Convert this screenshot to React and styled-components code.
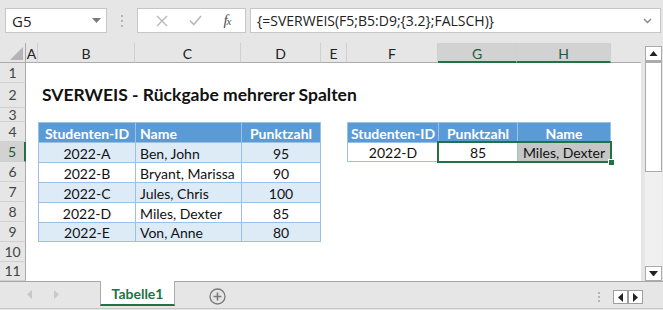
import React from 'react'
import styled, { createGlobalStyle } from 'styled-components'

const GlobalStyle = createGlobalStyle`
  html, body {
    margin: 0;
    padding: 0;
    background: #e6e6e6;
  }
  body {
    font-family: Lato, "Liberation Sans", sans-serif;
  }
`

const Window = styled.div`
  width: 663px;
  height: 310px;
  display: flex;
  flex-direction: column;
  background: #e6e6e6;
  overflow: hidden;
`

/* ---------- formula bar ---------- */

const FormulaBar = styled.div`
  height: 43px;
  flex: none;
  display: flex;
  align-items: flex-start;
  padding: 8px 2px 0 5px;
  box-sizing: border-box;
`

const Box = styled.div`
  height: 25px;
  box-sizing: border-box;
  background: #fff;
  border: 1px solid #c6c6c6;
  display: flex;
  align-items: center;
`

const NameBox = styled(Box)`
  width: 102px;
  justify-content: space-between;
  padding: 0 5px 0 6px;
  font: 15px "Open Sans", "Noto Sans", sans-serif;
  color: #222;
`

const Grip = styled.div`
  width: 30px;
  height: 25px;
  display: flex;
  flex-direction: column;
  align-items: center;
  justify-content: center;
  gap: 3px;

  span {
    width: 2px;
    height: 2px;
    background: #b4b4b4;
  }
`

const FnBox = styled(Box)`
  width: 109px;
  justify-content: space-around;
  padding: 0 4px 0 8px;
`

const Fx = styled.span`
  font: italic 15px "Liberation Serif", serif;
  color: #505050;
  letter-spacing: -1px;

  sub {
    font-size: 11px;
    vertical-align: 0;
  }
`

const FormulaInput = styled(Box)`
  flex: 1;
  margin-left: 4px;
  padding: 0 8px 0 6px;
  justify-content: space-between;
  font: 14px "Open Sans", "Noto Sans", sans-serif;
  color: #222;
`

/* ---------- sheet ---------- */

const SheetArea = styled.div`
  height: 238px;
  flex: none;
  display: flex;
`

const Grid = styled.div`
  width: 642px;
  display: grid;
  grid-template-columns: 26px 12px 97px 106px 80px 26px 91px 79px 94px 31px;
  grid-template-rows: 20px 20px 25px 14px repeat(7, 20px) 19px;
  background: #fff;
  overflow: hidden;
`

const Corner = styled.div`
  grid-column: 1;
  grid-row: 1;
  background: #e6e6e6;
  border-right: 1px solid #ababab;
  border-bottom: 1px solid #ababab;
  display: flex;
  align-items: flex-end;
  justify-content: flex-end;
  padding: 0 2px 2px 0;
`

const ColHead = styled.div`
  grid-row: 1;
  background: ${p => (p.$sel ? '#d2d2d2' : '#e6e6e6')};
  border-right: 1px solid ${p => (p.$last ? 'transparent' : '#d0d0d0')};
  border-bottom: ${p => (p.$sel ? '2px solid #217346' : '1px solid #ababab')};
  box-sizing: border-box;
  display: flex;
  align-items: center;
  justify-content: center;
  font-size: 14px;
  color: ${p => (p.$sel ? '#1e5b3a' : '#222')};
  padding-top: 2px;
`

const RowHead = styled.div`
  grid-column: 1;
  background: ${p => (p.$sel ? '#d2d2d2' : '#e6e6e6')};
  border-right: ${p => (p.$sel ? '2px solid #217346' : '1px solid #ababab')};
  border-bottom: 1px solid #d0d0d0;
  box-sizing: border-box;
  display: flex;
  align-items: center;
  justify-content: center;
  font-size: 14px;
  line-height: 12px;
  color: ${p => (p.$sel ? '#1e5b3a' : '#444')};
`

const RightEdge = styled.div`
  grid-column: 10;
  grid-row: 2 / -1;
  border-right: 1px solid #a6a6a6;
`

const Title = styled.div`
  grid-column: 3 / 11;
  grid-row: 3;
  display: flex;
  align-items: flex-end;
  padding: 0 0 3px 4px;
  font-size: 17.5px;
  font-weight: 700;
  color: #111;
  white-space: nowrap;
`

const Cell = styled.div`
  box-sizing: border-box;
  display: flex;
  align-items: center;
  justify-content: ${p => (p.$align === 'left' ? 'flex-start' : 'center')};
  padding: 1px 4px 0;
  font-size: 14px;
  font-weight: ${p => (p.$head ? 700 : 400)};
  color: ${p => (p.$head ? '#fff' : '#111')};
  background: ${p => p.$bg};
  border-left: 1px solid #9bc2e6;
  border-top: 1px solid #9bc2e6;
  border-right: ${p => (p.$lastCol ? '1px solid #9bc2e6' : 'none')};
  border-bottom: ${p => (p.$lastRow ? '1px solid #9bc2e6' : 'none')};
  white-space: nowrap;
`

const Selection = styled.div`
  grid-column: 8 / 10;
  grid-row: 6;
  margin: -1px -1px -1px -1px;
  border: 2px solid #217346;
  position: relative;
  z-index: 2;
  pointer-events: none;

  &::after {
    content: '';
    position: absolute;
    right: -5px;
    bottom: -5px;
    width: 5px;
    height: 5px;
    background: #217346;
    border: 1px solid #fff;
  }
`

/* ---------- scroll bar ---------- */

const VScroll = styled.div`
  width: 17px;
  margin: 3px 1px 0 4px;
  display: flex;
  flex-direction: column;
  background: #f0f0f0;
`

const ScrollBtn = styled.div`
  height: 15px;
  flex: none;
  box-sizing: border-box;
  background: #fff;
  border: 1px solid #ababab;
  display: flex;
  align-items: center;
  justify-content: center;
`

const Thumb = styled.div`
  height: 111px;
  flex: none;
  box-sizing: border-box;
  background: #fff;
  border: 1px solid #ababab;
  border-top-width: 2px;
`

const Track = styled.div`
  flex: 1;
`

/* ---------- tabs ---------- */

const TabBar = styled.div`
  flex: 1;
  display: flex;
  align-items: flex-start;
  border-top: 1px solid #a6a6a6;
  border-bottom: 1px solid #c6c6c6;
  margin-bottom: 1px;
`

const NavArrows = styled.div`
  width: 100px;
  height: 25px;
  display: flex;
  align-items: center;
  padding-left: 27px;
  gap: 22px;
  box-sizing: border-box;
`

const Tab = styled.div`
  width: 75px;
  height: 25px;
  box-sizing: border-box;
  margin-top: -1px;
  background: #fff;
  border-left: 1px solid #ababab;
  border-right: 1px solid #ababab;
  border-bottom: 2px solid #217346;
  display: flex;
  align-items: center;
  justify-content: center;
  font-size: 14px;
  font-weight: 700;
  color: #217346;
  padding-top: 1px;
`

const AddSheet = styled.div`
  margin: 6px 0 0 34px;
  width: 17px;
  height: 17px;
`

const TabSpacer = styled.div`
  flex: 1;
`

const HScrollNav = styled.div`
  display: flex;
  align-items: center;
  gap: 13px;
  margin: 8px 20px 0 0;
`

const Dots = styled.div`
  display: flex;
  flex-direction: column;
  gap: 2px;

  span {
    width: 2px;
    height: 2px;
    background: #b4b4b4;
  }
`

const ArrowPair = styled.div`
  display: flex;
  border: 1px solid #9e9e9e;
  background: #9e9e9e;
  gap: 2px;
`

const ArrowBtn = styled.div`
  width: 13px;
  height: 12px;
  background: #fff;
  display: flex;
  align-items: center;
  justify-content: center;
`

/* ---------- data ---------- */

const colHeads = ['A', 'B', 'C', 'D', 'E', 'F', 'G', 'H', '']
const rowNumbers = [1, 2, 3, 4, 5, 6, 7, 8, 9, 10, 11]

const tables = [
  {
    row: 4,
    col: 2,
    banded: true,
    heads: [
      ['Studenten-ID', 'center'],
      ['Name', 'left'],
      ['Punktzahl', 'center'],
    ],
    rows: [
      ['2022-A', 'Ben, John', '95'],
      ['2022-B', 'Bryant, Marissa', '90'],
      ['2022-C', 'Jules, Chris', '100'],
      ['2022-D', 'Miles, Dexter', '85'],
      ['2022-E', 'Von, Anne', '80'],
    ],
  },
  {
    row: 4,
    col: 6,
    banded: false,
    heads: [
      ['Studenten-ID', 'center'],
      ['Punktzahl', 'center'],
      ['Name', 'center'],
    ],
    rows: [['2022-D', '85', 'Miles, Dexter']],
  },
]

const DataTable = ({ table }) => {
  const last = table.rows.length
  const out = []
  table.heads.forEach(([label, align], c) => {
    out.push(
      <Cell
        key={`h${c}`}
        $head
        $align={align}
        $bg="#5b9bd5"
        $lastCol={c === table.heads.length - 1}
        style={{ gridRow: table.row + 1, gridColumn: table.col + c + 1 }}
      >
        {label}
      </Cell>
    )
  })
  table.rows.forEach((r, i) => {
    r.forEach((v, c) => {
      let bg = table.banded && i % 2 === 0 ? '#ddebf7' : '#fff'
      // H5 is inside the selection but not the active cell
      if (!table.banded && c === 2) bg = '#c6c6c6'
      out.push(
        <Cell
          key={`${i}-${c}`}
          $align={table.heads[c][1]}
          $bg={bg}
          $lastCol={c === r.length - 1}
          $lastRow={i === last - 1}
          style={{ gridRow: table.row + i + 2, gridColumn: table.col + c + 1 }}
        >
          {v}
        </Cell>
      )
    })
  })
  return out
}

const Tri = ({ dir, color = '#222', size = 5 }) => {
  const pts = {
    up: `0,${size} ${size},${size} ${size / 2},0`,
    down: `0,0 ${size},0 ${size / 2},${size}`,
    left: `${size},0 ${size},${size} 0,${size / 2}`,
    right: `0,0 0,${size} ${size},${size / 2}`,
  }[dir]
  const vertical = dir === 'up' || dir === 'down'
  return (
    <svg
      width={vertical ? size + 2 : size / 2 + 1}
      height={vertical ? size / 2 + 2 : size + 1}
      viewBox={`0 0 ${size} ${size}`}
      preserveAspectRatio="none"
    >
      <polygon points={pts} fill={color} />
    </svg>
  )
}

export default function App() {
  return (
    <Window>
      <GlobalStyle />
      <FormulaBar>
        <NameBox>
          <span>G5</span>
          <svg width="9" height="5" viewBox="0 0 9 5">
            <polygon points="0,0 9,0 4.5,5" fill="#7a7a7a" />
          </svg>
        </NameBox>
        <Grip>
          <span />
          <span />
          <span />
        </Grip>
        <FnBox>
          <svg width="12" height="12" viewBox="0 0 12 12">
            <path d="M1 1 L11 11 M11 1 L1 11" stroke="#b8b8b8" strokeWidth="1.4" />
          </svg>
          <svg width="13" height="11" viewBox="0 0 13 11">
            <path d="M1 5.5 L4.8 9.5 L12 1" stroke="#b8b8b8" strokeWidth="1.6" fill="none" />
          </svg>
          <Fx>
            f<sub>x</sub>
          </Fx>
        </FnBox>
        <FormulaInput>
          <span>{'{=SVERWEIS(F5;B5:D9;{3.2};FALSCH)}'}</span>
          <svg width="9" height="6" viewBox="0 0 9 6">
            <path d="M1 1 L4.5 4.5 L8 1" stroke="#8a8a8a" strokeWidth="1.5" fill="none" />
          </svg>
        </FormulaInput>
      </FormulaBar>

      <SheetArea>
        <Grid>
          <Corner>
            <svg width="13" height="13" viewBox="0 0 13 13">
              <polygon points="13,0 13,13 0,13" fill="#b4b4b4" />
            </svg>
          </Corner>
          {colHeads.map((c, i) => (
            <ColHead
              key={i}
              style={{ gridColumn: i + 2 }}
              $sel={c === 'G' || c === 'H'}
              $last={i === colHeads.length - 1}
            >
              {c}
            </ColHead>
          ))}
          {rowNumbers.map(r => (
            <RowHead key={r} style={{ gridRow: r + 1 }} $sel={r === 5}>
              {r}
            </RowHead>
          ))}
          <RightEdge />
          <Title>SVERWEIS - Rückgabe mehrerer Spalten</Title>
          {tables.map((t, i) => (
            <DataTable key={i} table={t} />
          ))}
          <Selection />
        </Grid>
        <VScroll>
          <ScrollBtn>
            <Tri dir="up" size={7} />
          </ScrollBtn>
          <Thumb />
          <Track />
          <ScrollBtn>
            <Tri dir="down" size={7} />
          </ScrollBtn>
        </VScroll>
      </SheetArea>

      <TabBar>
        <NavArrows>
          <Tri dir="left" color="#c8c8c8" size={8} />
          <Tri dir="right" color="#c8c8c8" size={8} />
        </NavArrows>
        <Tab>Tabelle1</Tab>
        <AddSheet>
          <svg width="17" height="17" viewBox="0 0 17 17">
            <circle cx="8.5" cy="8.5" r="7.5" fill="none" stroke="#7a7a7a" strokeWidth="1.3" />
            <path d="M8.5 4.5 V12.5 M4.5 8.5 H12.5" stroke="#7a7a7a" strokeWidth="1.6" />
          </svg>
        </AddSheet>
        <TabSpacer />
        <HScrollNav>
          <Dots>
            <span />
            <span />
            <span />
          </Dots>
          <ArrowPair>
            <ArrowBtn>
              <Tri dir="left" size={8} />
            </ArrowBtn>
            <ArrowBtn>
              <Tri dir="right" size={8} />
            </ArrowBtn>
          </ArrowPair>
        </HScrollNav>
      </TabBar>
    </Window>
  )
}
